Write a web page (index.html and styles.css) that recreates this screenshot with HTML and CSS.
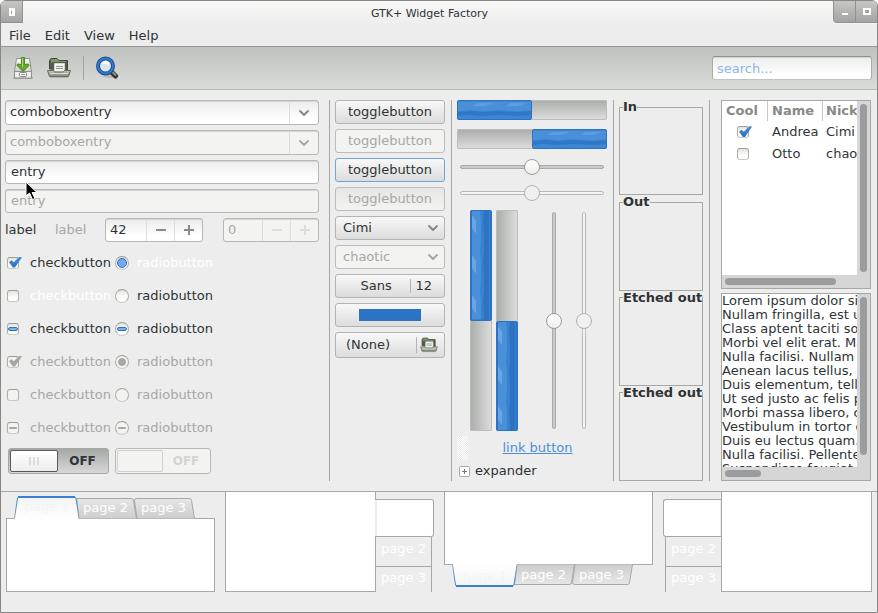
FILE: index.html
```html
<!DOCTYPE html>
<html lang="en">
<head>
<meta charset="utf-8">
<title>GTK+ Widget Factory</title>
<link rel="stylesheet" href="styles.css">
</head>
<body>
<svg class="defs" aria-hidden="true">
  <defs>
    <linearGradient id="metal" x1="0" y1="0" x2="0" y2="1"><stop offset="0" stop-color="#fafafa"/><stop offset="1" stop-color="#b9bdb6"/></linearGradient>
    <linearGradient id="tray" x1="0" y1="0" x2="0" y2="1"><stop offset="0" stop-color="#c3c8bc"/><stop offset="1" stop-color="#858b7d"/></linearGradient>
    <linearGradient id="tab-on" x1="0" y1="0" x2="0" y2="1"><stop offset="0" stop-color="#f3f3f3"/><stop offset="1" stop-color="#ffffff"/></linearGradient>
    <linearGradient id="tab-off" x1="0" y1="0" x2="0" y2="1"><stop offset="0" stop-color="#e6e6e6"/><stop offset="1" stop-color="#cdcdcd"/></linearGradient>
    <linearGradient id="tab-edge" x1="0" y1="0" x2="0" y2="1"><stop offset="0" stop-color="#3584dd"/><stop offset="0.4" stop-color="#4a90d9"/><stop offset="1" stop-color="#a0a4a0"/></linearGradient>
    <pattern id="wave" width="75" height="20" patternUnits="userSpaceOnUse">
      <path fill="#3d86d3" d="M0 0h75v20H0z"/>
      <path fill="#4a90d9" d="M0 1h75v8l-16 1-20-1-14 1-12-1-13 1z"/>
      <path fill="#2f78c7" d="M0 11l13-1 12 1 14-1 20 1 16-1v4l-14 1-20-1-18 1-12-1-11 1z"/>
      <path fill="#5d9de0" d="M20 2h18l-12 3H14zM52 2h18l-10 3H48z"/>
    </pattern>
    <pattern id="wave-v" width="22" height="40" patternUnits="userSpaceOnUse">
      <path fill="#2c74c3" d="M0 0h22v40H0z"/>
      <path fill="#3a81cf" d="M9 0h4l-1 11 1 12v17H9zM18 0h1v40h-1z"/>
      <path fill="#4a90d9" d="M1 0h8l1 12v12l-1 16H1z"/>
      <path fill="#69a5e5" d="M1 4l4 6v13l-4-6z"/>
    </pattern>
    <symbol id="chevron" viewBox="0 0 12 8"><path d="M2 2l4 4 4-4" fill="none" stroke="currentColor" stroke-width="2" stroke-linecap="round" stroke-linejoin="round"/></symbol>
    <symbol id="folder" viewBox="0 0 24 22">
      <path fill="#555b53" stroke="#42473f" d="M2.500 12V3.500L4 1.500h6l2 2h8.500V13z"/>
      <path fill="#7a9d5b" d="M4 2h6l2 2h7v2H4z"/>
      <path fill="#555b53" d="M5 5h15v3H5z"/>
      <path fill="#f3f3f1" stroke="#d3d7cf" d="M7.500 6.500h10v8h-10z"/>
      <path stroke="#92968e" d="M9 9.500h7M9 11.500h7"/>
      <path fill="url(#tray)" stroke="#666b61" stroke-linejoin="round" d="M.5 13.500h6l1 1.500h9l1-1.500h6l-2 6h-19z"/>
      <path stroke="#d8dcd2" d="M3 16.500h18"/>
      <path stroke="#000" stroke-opacity=".15" d="M3 20.500h18"/>
    </symbol>
  </defs>
</svg>

<div class="window">
  <header class="titlebar">
    <button class="wm-button wm-menu" aria-label="Window menu"><svg width="6" height="8"><path fill="#fff" d="M0 0h6v8H0z"/><path stroke="#999" d="M2.500 3v3"/></svg></button>
    <h1 class="title">GTK+ Widget Factory</h1>
    <div class="wm-group">
      <button class="wm-button" aria-label="Minimize"><svg width="8" height="8"><path fill="#fff" d="M1 5h6v2H1z"/></svg></button>
      <button class="wm-button" aria-label="Maximize"><svg width="8" height="8"><path fill="#fff" d="M0 0h8v7H0z"/><path fill="#a3a4a2" d="M2 2h4v3H2z"/></svg></button>
    </div>
  </header>

  <nav class="menubar">
    <button class="menu">File</button>
    <button class="menu">Edit</button>
    <button class="menu">View</button>
    <button class="menu">Help</button>
  </nav>

  <div class="toolbar">
    <button class="tool" aria-label="Save">
      <svg width="22" height="24" viewBox="0 0 22 24">
        <path fill="#000" fill-opacity=".15" d="M1 21h20v2H1z"/>
        <path fill="url(#metal)" stroke="#8d918b" d="M4.500 2.500h13l2 13v6.500h-17v-6.500z"/>
        <path fill="#eceeea" stroke="#8d918b" d="M2.500 15.500h17V22h-17z"/>
        <rect x="7.500" y="16.500" width="7" height="4" rx="1" fill="#fff" stroke="#7d817b"/>
        <path stroke="#8d918b" d="M9 18.500h4"/>
        <path fill="#66a82f" stroke="#4b8a1c" d="M9.500 1.500h3v7l4-.500.500 1.500-6 6-6-6 .500-1.500 4 .500z"/>
        <path stroke="#a4d873" d="M10.500 2v9"/>
      </svg>
    </button>
    <button class="tool" aria-label="Open"><svg width="24" height="22"><use href="#folder"/></svg></button>
    <span class="tool-separator"></span>
    <button class="tool" aria-label="Find">
      <svg width="24" height="24" viewBox="0 0 24 24">
        <ellipse cx="15" cy="20" rx="8" ry="2" fill="#000" fill-opacity=".12"/>
        <path stroke="#333" stroke-width="5" stroke-linecap="round" d="M15.500 16l4 4"/>
        <path stroke="#8b8f86" stroke-width="2" d="M16 15.500l4 4"/>
        <circle cx="9.500" cy="10" r="7.500" fill="#dce6ef" stroke="#1d4f91" stroke-width="4"/>
        <circle cx="9.500" cy="10" r="7.500" fill="none" stroke="#3478cb" stroke-width="2"/>
        <path fill="#fff" d="M5.500 8q2-4 6-3 3 2 1 4-4-2-7-1z"/>
      </svg>
    </button>
    <input class="field search" type="search" placeholder="search..." aria-label="Search">
  </div>

  <main class="factory">
    <section class="entries">
      <div class="combo">
        <input class="combo-text" value="comboboxentry" aria-label="Combo entry">
        <button class="combo-button" aria-label="Show choices"><svg width="12" height="8"><use href="#chevron"/></svg></button>
      </div>
      <div class="combo off">
        <input class="combo-text" value="comboboxentry" aria-label="Combo entry, insensitive" disabled>
        <button class="combo-button" aria-label="Show choices" disabled><svg width="12" height="8"><use href="#chevron"/></svg></button>
      </div>
      <input class="field" value="entry" aria-label="Entry">
      <input class="field" value="entry" aria-label="Entry, insensitive" disabled>
      <div class="spin-row">
        <label class="spin-label" for="spin-on">label</label>
        <label class="spin-label muted" for="spin-off">label</label>
        <div class="spin">
          <input id="spin-on" class="spin-text" value="42" inputmode="numeric">
          <button class="spin-button" aria-label="Decrease"><svg width="12" height="12"><path stroke="currentColor" stroke-width="2" d="M1 6h10"/></svg></button>
          <button class="spin-button" aria-label="Increase"><svg width="12" height="12"><path stroke="currentColor" stroke-width="2" d="M1 6h10M6 1v10"/></svg></button>
        </div>
        <div class="spin off">
          <input id="spin-off" class="spin-text" value="0" inputmode="numeric" disabled>
          <button class="spin-button" aria-label="Decrease" disabled><svg width="12" height="12"><path stroke="currentColor" stroke-width="2" d="M1 6h10"/></svg></button>
          <button class="spin-button" aria-label="Increase" disabled><svg width="12" height="12"><path stroke="currentColor" stroke-width="2" d="M1 6h10M6 1v10"/></svg></button>
        </div>
      </div>
      <div class="toggles">
        <div class="choices">
          <label class="choice"><input class="check" type="checkbox" checked>checkbutton</label>
          <label class="choice lit"><input class="radio" type="radio" name="r1" checked>radiobutton</label>
          <label class="choice lit"><input class="check" type="checkbox">checkbutton</label>
          <label class="choice"><input class="radio" type="radio" name="r1">radiobutton</label>
          <label class="choice"><input class="check mixed" type="checkbox">checkbutton</label>
          <label class="choice"><input class="radio mixed" type="radio" name="r2">radiobutton</label>
          <label class="choice muted"><input class="check" type="checkbox" checked disabled>checkbutton</label>
          <label class="choice muted"><input class="radio" type="radio" name="r3" checked disabled>radiobutton</label>
          <label class="choice muted"><input class="check" type="checkbox" disabled>checkbutton</label>
          <label class="choice muted"><input class="radio" type="radio" name="r4" disabled>radiobutton</label>
          <label class="choice muted"><input class="check mixed" type="checkbox" disabled>checkbutton</label>
          <label class="choice muted"><input class="radio mixed" type="radio" name="r5" disabled>radiobutton</label>
        </div>
        <div class="switches">
          <button class="switch" role="switch" aria-checked="false"><span class="knob"><svg width="12" height="8"><path stroke="#dcdcdc" stroke-width="2" d="M2 0v8M6 0v8M10 0v8"/></svg></span><span class="switch-text">OFF</span></button>
          <button class="switch" role="switch" aria-checked="false" disabled><span class="knob"></span><span class="switch-text">OFF</span></button>
        </div>
      </div>
    </section>

    <section class="column buttons">
      <button class="button">togglebutton</button>
      <button class="button" disabled>togglebutton</button>
      <button class="button focused" aria-pressed="true">togglebutton</button>
      <button class="button pressed" aria-pressed="true" disabled>togglebutton</button>
      <div class="select-wrap"><select class="button select" aria-label="Choice"><option>Cimi</option></select><svg class="select-arrow" width="12" height="8"><use href="#chevron"/></svg></div>
      <div class="select-wrap off"><select class="button select" aria-label="Choice, insensitive" disabled><option>chaotic</option></select><svg class="select-arrow" width="12" height="8"><use href="#chevron"/></svg></div>
      <button class="button split"><span class="split-main">Sans</span><span class="split-end">12</span></button>
      <button class="button" aria-label="Pick a color"><span class="swatch"></span></button>
      <button class="button split file"><span class="split-main">(None)</span><span class="split-end"><svg width="18" height="16"><use href="#folder"/></svg></span></button>
    </section>

    <section class="column gauges">
      <div class="bar" role="progressbar" aria-valuenow="50"><svg class="bar-fill" width="50%" height="100%"><rect width="100%" height="100%" fill="url(#wave)"/></svg></div>
      <div class="bar inverted" role="progressbar" aria-valuenow="50"><svg class="bar-fill" width="50%" height="100%"><rect width="100%" height="100%" fill="url(#wave)"/></svg></div>
      <input class="slider" type="range" value="50" aria-label="Scale">
      <input class="slider" type="range" value="50" aria-label="Scale, insensitive" disabled>
      <div class="uprights">
        <div class="bar tall" role="progressbar" aria-valuenow="50"><svg class="bar-fill" width="100%" height="50%"><rect width="100%" height="100%" fill="url(#wave-v)"/></svg></div>
        <div class="bar tall inverted" role="progressbar" aria-valuenow="50"><svg class="bar-fill" width="100%" height="50%"><rect width="100%" height="100%" fill="url(#wave-v)"/></svg></div>
        <div class="tall-sliders">
          <input class="slider upright" type="range" value="50" aria-label="Vertical scale">
          <input class="slider upright" type="range" value="50" aria-label="Vertical scale, insensitive" disabled>
        </div>
      </div>
      <div class="link-row"><span class="grip"></span><a class="link" href="#">link button</a></div>
      <button class="expander" aria-expanded="false"><svg width="11" height="11"><rect x=".5" y=".5" width="10" height="10" rx="1" fill="#fff" stroke="#a5a8a5"/><path stroke="#777" d="M3 5.500h5M5.500 3v5"/></svg>expander</button>
    </section>

    <section class="column frames">
      <fieldset class="frame"><legend>In</legend></fieldset>
      <fieldset class="frame"><legend>Out</legend></fieldset>
      <fieldset class="frame"><legend>Etched out</legend></fieldset>
      <fieldset class="frame"><legend>Etched out</legend></fieldset>
    </section>

    <section class="column lists">
      <div class="scroller">
        <div class="scroll-view">
          <table class="tree">
            <thead><tr><th>Cool</th><th>Name</th><th>Nick</th></tr></thead>
            <tbody>
              <tr><td><input class="check" type="checkbox" aria-label="Andrea is cool" checked></td><td>Andrea</td><td>Cimi</td></tr>
              <tr><td><input class="check" type="checkbox" aria-label="Otto is cool"></td><td>Otto</td><td>chao</td></tr>
            </tbody>
          </table>
        </div>
        <div class="rail rail-v"><span class="thumb tree-v"></span></div>
        <div class="rail rail-h"><span class="thumb tree-h"></span></div>
      </div>
      <div class="scroller">
        <textarea class="scroll-view text" wrap="off" aria-label="Text view">Lorem ipsum dolor sit
Nullam fringilla, est ut
Class aptent taciti socios
Morbi vel elit erat. Ma
Nulla facilisi. Nullam e
Aenean lacus tellus, pe
Duis elementum, tellu
Ut sed justo ac felis p
Morbi massa libero, co
Vestibulum in tortor d
Duis eu lectus quam.
Nulla facilisi. Pellentesq
Suspendisse feugiat a</textarea>
        <div class="rail rail-v"><span class="thumb text-v"></span></div>
        <div class="rail rail-h"><span class="thumb text-h"></span></div>
      </div>
    </section>
  </main>

  <footer class="notebooks">
    <div class="notebook top">
      <div class="tabs">
        <button class="tab on"><svg class="tab-shape" width="66" height="24"><path fill="url(#tab-on)" d="M.5 24L3.500 3 5 1h54l3 2 3 21z"/><path fill="none" stroke="url(#tab-edge)" d="M.5 23.500L3.500 3 5 1.500h54L62 3l3 20.500"/><path stroke="#3a7fd5" stroke-width="2" d="M4 2h57"/></svg><span class="tab-text">page 1</span></button>
        <button class="tab"><svg class="tab-shape" width="63" height="21"><path fill="url(#tab-off)" stroke="#a5a8a5" d="M3 20.500L.5 .5h55q2 0 2 2l3 18"/></svg><span class="tab-text">page 2</span></button>
        <button class="tab"><svg class="tab-shape" width="63" height="21"><path fill="url(#tab-off)" stroke="#a5a8a5" d="M3 20.500L.5 2.500q0-2 2-2h53q2 0 2 2l3 18"/></svg><span class="tab-text">page 3</span></button>
      </div>
      <div class="page"></div>
    </div>
    <div class="notebook side">
      <div class="page"></div>
      <div class="side-tabs"><button class="side-tab on" aria-label="page 1"></button><button class="side-tab">page 2</button><button class="side-tab">page 3</button></div>
    </div>
    <div class="notebook bottom">
      <div class="page"></div>
      <div class="tabs">
        <button class="tab on"><svg class="tab-shape" width="66" height="24"><path fill="url(#tab-on)" d="M.5 24L3.500 3 5 1h54l3 2 3 21z"/><path fill="none" stroke="url(#tab-edge)" d="M.5 23.500L3.500 3 5 1.500h54L62 3l3 20.500"/><path stroke="#3a7fd5" stroke-width="2" d="M4 2h57"/></svg><span class="tab-text">page 1</span></button>
        <button class="tab"><svg class="tab-shape" width="63" height="21"><path fill="url(#tab-off)" stroke="#a5a8a5" d="M3 20.500L.5 .5h55q2 0 2 2l3 18"/></svg><span class="tab-text">page 2</span></button>
        <button class="tab"><svg class="tab-shape" width="63" height="21"><path fill="url(#tab-off)" stroke="#a5a8a5" d="M3 20.500L.5 2.500q0-2 2-2h53q2 0 2 2l3 18"/></svg><span class="tab-text">page 3</span></button>
      </div>
    </div>
    <div class="notebook side left">
      <div class="page"></div>
      <div class="side-tabs"><button class="side-tab on" aria-label="page 1"></button><button class="side-tab">page 2</button><button class="side-tab">page 3</button></div>
    </div>
  </footer>
</div>

<svg class="pointer" width="13" height="20" aria-hidden="true"><path fill="#000" stroke="#fff" d="M1 1v14l3.500-3 3 6.500 2.500-1-3-6H12z"/></svg>
</body>
</html>
```

FILE: styles.css
```css
*, *::before { box-sizing: border-box; }

:root {
  --text: #2e3436;
  --muted: #a5a8a5;
  --line: #a5a8a5;
  --bg: #ededed;
  --off: #f3f3f1;
  --blue: #2c74c3;
}

body {
  margin: 0;
  background: #fff;
  color: var(--text);
  font: 13px/14px "DejaVu Sans", sans-serif;
}

button, input, select, textarea {
  margin: 0;
  padding: 0;
  border: 0;
  background: none;
  color: inherit;
  font: inherit;
  outline: none;
}

svg { display: block; }

.defs { position: absolute; width: 0; height: 0; }

.window {
  display: flex;
  flex-direction: column;
  min-height: 100vh;
  border: 1px solid #868786;
  border-radius: 6px 6px 0 0;
  background: var(--bg);
  overflow: hidden;
}

/* Title bar and menus */
.titlebar {
  display: flex;
  align-items: flex-start;
  height: 24px;
  background: linear-gradient(#f8f8f7, #ededed);
}
.title {
  flex: 1;
  margin: 0;
  padding-left: 4px;
  font-size: 11px;
  line-height: 26px;
  font-weight: normal;
  text-align: center;
}
.wm-group {
  display: flex;
  border: solid #f5f5f5;
  border-width: 0 0 1px 1px;
  border-radius: 0 0 0 5px;
  overflow: hidden;
}
.wm-button {
  display: grid;
  place-items: center;
  width: 22px;
  height: 22px;
  border: solid #8f918f;
  border-width: 0 0 1px 1px;
  background: linear-gradient(#c6c7c5, #a2a4a1);
}
.wm-menu { border-width: 0 1px 1px 0; }

.menubar {
  display: flex;
  gap: 14px;
  height: 22px;
  padding: 0 8px;
  border-bottom: 1px solid #939893;
}

/* Toolbar */
.toolbar {
  display: flex;
  align-items: center;
  gap: 11px;
  height: 43px;
  padding: 0 5px 0 10px;
  border-bottom: 1px solid #b7bab7;
  background: linear-gradient(#bfc2be, #dadcd9);
}
.tool { padding: 0 1px; }
.tool-separator {
  width: 1px;
  height: 24px;
  background: #a0a39f;
}

.field {
  width: 100%;
  height: 24px;
  padding: 0 5px 2px;
  border: 1px solid #b5b8b5;
  border-radius: 3px;
  background: linear-gradient(#ececec, #fff 80%);
  box-shadow: inset 0 1px #d5d5d5;
}
.field:disabled { background: var(--off); color: var(--muted); }
.search {
  width: 160px;
  margin-left: auto;
  padding: 0 4px;
  appearance: none;
  border-color: #90938f #a9aca8 #c0c2bf;
}
.search::placeholder { color: #8db9e6; }

/* Widget columns */
.factory {
  display: flex;
  flex: 1;
  gap: 6px;
  padding: 10px 6px 10px 4px;
}
.column {
  padding-left: 5px;
  border-left: 1px solid var(--line);
}

.entries {
  display: flex;
  flex: 1;
  flex-direction: column;
  gap: 5px;
  min-width: 314px;
  margin-right: 4px;
}
.combo, .spin {
  display: flex;
  height: 25px;
  border: 1px solid #b5b8b5;
  border-radius: 3px;
  background: linear-gradient(#ececec, #fff 80%);
  box-shadow: inset 0 1px #d5d5d5;
}
.combo-text, .spin-text { flex: 1; min-width: 0; padding: 0 4px 1px; }
.combo-button {
  display: grid;
  place-items: center;
  width: 29px;
  border-left: 1px solid #ddd;
  color: #888a85;
}
.combo.off, .spin.off { background: var(--off); color: var(--muted); }
.off .combo-button { color: var(--muted); }

.spin-row { display: flex; align-items: center; }
.spin-label { width: 50px; }
.spin { width: 98px; height: 24px; }
.spin.off { width: 96px; margin-left: auto; }
.spin-button {
  display: grid;
  place-items: center;
  width: 28px;
  border-left: 1px solid #ddd;
  color: #888a85;
}
.off .spin-button { color: #dcdedc; }

.muted { color: var(--muted); }

.toggles { margin-top: -1px; }
.choices {
  display: grid;
  grid-template-columns: 108px 1fr;
  grid-auto-rows: 33px;
}
.choice {
  display: flex;
  align-items: center;
  gap: 11px;
  padding-left: 2px;
}
.choice:nth-child(even) { gap: 8px; }
.lit { color: #fff; }

.check, .radio {
  position: relative;
  flex: none;
  width: 12px;
  height: 12px;
  appearance: none;
  border: 1px solid #a9aba2;
  border-color: #999c90 #adafa7 #c8cac4;
  border-radius: 3px;
  background: linear-gradient(#e4e4e2, #fff 70%);
}
.radio { width: 14px; height: 14px; border-radius: 50%; }
.check:disabled, .radio:disabled { background: var(--off); }
.check::before, .radio::before { content: none; position: absolute; }
.check:checked::before {
  content: "";
  top: -1px;
  left: 1px;
  width: 13px;
  height: 11px;
  background: linear-gradient(#4a90d9, #2c6fbb);
  clip-path: polygon(0 52%, 18% 34%, 38% 52%, 80% 0, 100% 6%, 46% 100%, 30% 100%);
}
.radio:checked::before {
  content: "";
  inset: 1px;
  border: 1px solid #2c6fbb;
  border-radius: 50%;
  background: #71aaf0;
}
.mixed::before {
  content: "";
  top: 3px;
  left: 0;
  width: 10px;
  height: 4px;
  border: 1px solid var(--blue);
  border-radius: 2px;
  background: #7cb1e8;
}
.radio.mixed::before { top: 4px; left: 1px; }
.check:disabled::before { background: var(--muted); border-color: var(--muted); }
.radio:disabled::before { background: var(--muted); border-color: var(--muted); }
.radio:checked:disabled::before { inset: 2px; }
.mixed:disabled::before { left: 1px; width: 8px; height: 2px; margin-top: 1px; border: 0; }
.radio.mixed:disabled::before { left: 2px; }

.switches { display: flex; gap: 6px; padding: 4px 0 0 3px; }
.switch {
  display: flex;
  width: 101px;
  height: 26px;
  padding: 1px;
  border: 1px solid #a5a8a5;
  border-radius: 3px;
  background: linear-gradient(#a5a8a5, #d8d8d8);
  font-weight: bold;
  font-size: 12px;
}
.switch:disabled { width: 96px; background: var(--off); border-color: #b7b9b6; color: #d3d5d3; }
.knob {
  display: grid;
  place-items: center;
  width: 48px;
  height: 22px;
  border: 1px solid #555a58;
  border-radius: 2px;
  background: linear-gradient(#fff, #ededed);
}
.switch:disabled .knob { width: 46px; border-color: #cfd1cf; background: var(--off); }
.switch-text { flex: 1; line-height: 22px; }

/* Buttons */
.buttons { display: flex; flex-direction: column; gap: 5px; width: 116px; }
.button {
  display: block;
  width: 100%;
  height: 24px;
  border: 1px solid #b2b4b2;
  border-radius: 3px;
  background: linear-gradient(#f8f8f8, #dcdcdc);
  text-align: center;
}
.button:disabled { background: var(--off); color: var(--muted); opacity: 1; border-color: #bbbdbb; }
.button.pressed { background: linear-gradient(#e6e6e4, #f3f3f1); }
.button.focused { border-color: #6fa3dc; }
.select-wrap { position: relative; color: #888a85; }
.select-wrap.off { color: var(--muted); }
.select { padding: 0 7px; appearance: none; text-align: left; color: var(--text); }
.select-arrow { position: absolute; top: 8px; right: 6px; pointer-events: none; }
.split { display: flex; align-items: center; }
.split-main { flex: 1; padding-left: 6px; }
.split-end { padding: 0 12px 0 4px; border-left: 1px solid #b2b4b2; }
.file { height: 26px; }
.file .split-main { padding: 0 16px 0 0; }
.file .split-end { padding: 0 6px 0 3px; }
.swatch {
  display: block;
  width: 62px;
  height: 12px;
  margin: 0 auto;
  background: var(--blue);
}

/* Progress bars and scales */
.gauges { display: flex; flex-direction: column; width: 156px; }
.bar {
  display: flex;
  height: 20px;
  margin-bottom: 9px;
  border-radius: 2px;
  background: linear-gradient(#a9aca9, #dedede);
  box-shadow: inset 0 0 0 1px #bbbdbb;
}
.bar.inverted { justify-content: flex-end; }
.bar-fill {
  flex: none;
  border: 1px solid var(--blue);
  border-radius: 2px;
  background: var(--blue);
}
.slider {
  width: 144px;
  height: 16px;
  margin: 1px auto 9px 3px;
  appearance: none;
}
.slider::-webkit-slider-runnable-track {
  height: 4px;
  border: 1px solid #a9aca9;
  border-radius: 2px;
  background: #c9cbc9;
}
.slider:disabled::-webkit-slider-runnable-track { background: #f3f3f1; border-color: #b9bbb9; }
.slider::-webkit-slider-thumb {
  width: 16px;
  height: 16px;
  margin-top: -7px;
  appearance: none;
  border: 1px solid #999c98;
  border-radius: 50%;
  background: linear-gradient(#fff, #eeeeec);
}
.slider:disabled::-webkit-slider-thumb { background: #f0f0ef; border-color: #b0b3b0; }
.uprights { display: flex; gap: 4px; height: 221px; padding-left: 13px; }
.bar.tall {
  width: 22px;
  height: 100%;
  background: linear-gradient(90deg, #a9aca9, #dedede);
}
.bar.tall.inverted { align-items: flex-end; }
.tall-sliders { display: flex; gap: 14px; padding: 2px 0 2px 24px; }
.slider.upright {
  width: 16px;
  height: 217px;
  margin: 0;
  writing-mode: vertical-lr;
}
.slider.upright::-webkit-slider-runnable-track { width: 4px; height: 100%; }
.slider.upright::-webkit-slider-thumb { margin: 0 0 0 -7px; }
.link-row { display: flex; align-items: center; height: 33px; }
.grip {
  width: 11px;
  height: 24px;
  background: conic-gradient(#fff 25%, #e9e9e9 0 50%, #fff 0 75%, #e9e9e9 0) 0 0 / 2px 2px;
}
.link { flex: 1; text-align: center; color: #4a90d9; }
.expander { display: flex; align-items: center; gap: 5px; padding-left: 2px; }

/* Frames */
.frames { display: flex; flex-direction: column; width: 90px; }
.frame {
  flex: 1;
  min-width: 0;
  margin: 0;
  padding: 0;
  border: 1px solid var(--line);
}
.frame legend { margin-left: 3px; padding: 0; font-weight: bold; white-space: nowrap; }

/* Scrolled views */
.lists {
  display: grid;
  grid-template-rows: 189px 188px;
  gap: 4px;
  width: 162px;
  padding-left: 11px;
}
.scroller {
  display: grid;
  grid-template: minmax(0, 1fr) 13px / minmax(0, 1fr) 13px;
  border: 1px solid var(--line);
  background: #d6d6d6;
}
.scroll-view { overflow: hidden; background: #fff; }
.text {
  width: 100%;
  height: 100%;
  resize: none;
  white-space: pre;
}
.rail { display: flex; padding: 3px; }
.thumb { border-radius: 4px; background: #9b9c9e; }
.tree-v { width: 7px; height: 168px; }
.tree-h { width: 111px; height: 7px; }
.text-v { width: 7px; height: 158px; }
.text-h { width: 36px; height: 7px; }

.tree { width: 100%; border-spacing: 0; table-layout: fixed; }
.tree th {
  height: 20px;
  padding: 0 0 0 4px;
  border-right: 1px solid #c9cac8;
  color: #888a85;
  text-align: left;
}
.tree th:nth-child(1) { width: 46px; }
.tree th:nth-child(2) { width: 55px; }
.tree th:nth-child(3), .tree td:nth-child(3) { padding-left: 3px; border: 0; }
.tree td { height: 22px; padding: 0 0 0 4px; }
.tree td:first-child { padding-left: 15px; }
.tree .check { display: block; }

/* Notebooks */
.notebooks {
  display: grid;
  grid-template-columns: repeat(4, 1fr);
  gap: 10px;
  height: 121px;
  padding: 0 5px 20px;
  border-top: 1px solid var(--line);
}
.notebook { display: flex; min-width: 0; }
.top, .bottom { flex-direction: column; }
.page { flex: 1; border: 1px solid var(--line); background: #fff; }
.tabs { display: flex; align-items: flex-end; height: 26px; padding-left: 8px; }
.tab {
  position: relative;
  width: 62px;
  height: 20px;
  margin-left: -4px;
  padding-right: 3px;
  color: #fff;
}
.tab.on { z-index: 1; width: 66px; height: 23px; margin-left: 0; padding: 0; color: #f4f4f4; }
.tab-shape { position: absolute; top: 0; left: 0; }
.tab-text { position: relative; }
.bottom .page, .side .page { border-top: 0; }
.bottom .tabs { align-items: flex-start; height: 28px; margin-top: -1px; }
.bottom .tab-shape { top: auto; bottom: 0; transform: scaleY(-1); }
.bottom .tab { height: 21px; }
.bottom .tab.on { height: 24px; }

.left { flex-direction: row-reverse; }
.side-tabs { display: flex; flex-direction: column; width: 58px; padding-top: 7px; }
.side-tab {
  height: 30px;
  margin-right: 2px;
  padding-bottom: 6px;
  border: solid var(--line);
  border-width: 0 1px 1px 0;
  color: #fff;
}
.side-tab.on {
  height: 38px;
  margin: 0 0 0 -1px;
  border-width: 1px 1px 1px 0;
  border-radius: 0 3px 3px 0;
  background: linear-gradient(90deg, #ededed 2px, #fff 2px);
}
.side-tab:last-child { height: 25px; border-bottom: 0; padding-bottom: 3px; }
.left .side-tab { margin: 0 0 0 2px; border-width: 0 0 1px 1px; }
.left .side-tab.on {
  margin: 0 -1px 0 0;
  border-width: 1px 0 1px 1px;
  border-radius: 3px 0 0 3px;
  background: linear-gradient(270deg, #ededed 2px, #fff 2px);
}
.left .side-tab:last-child { border-bottom: 0; }

.pointer { position: absolute; top: 181px; left: 25px; }
```
